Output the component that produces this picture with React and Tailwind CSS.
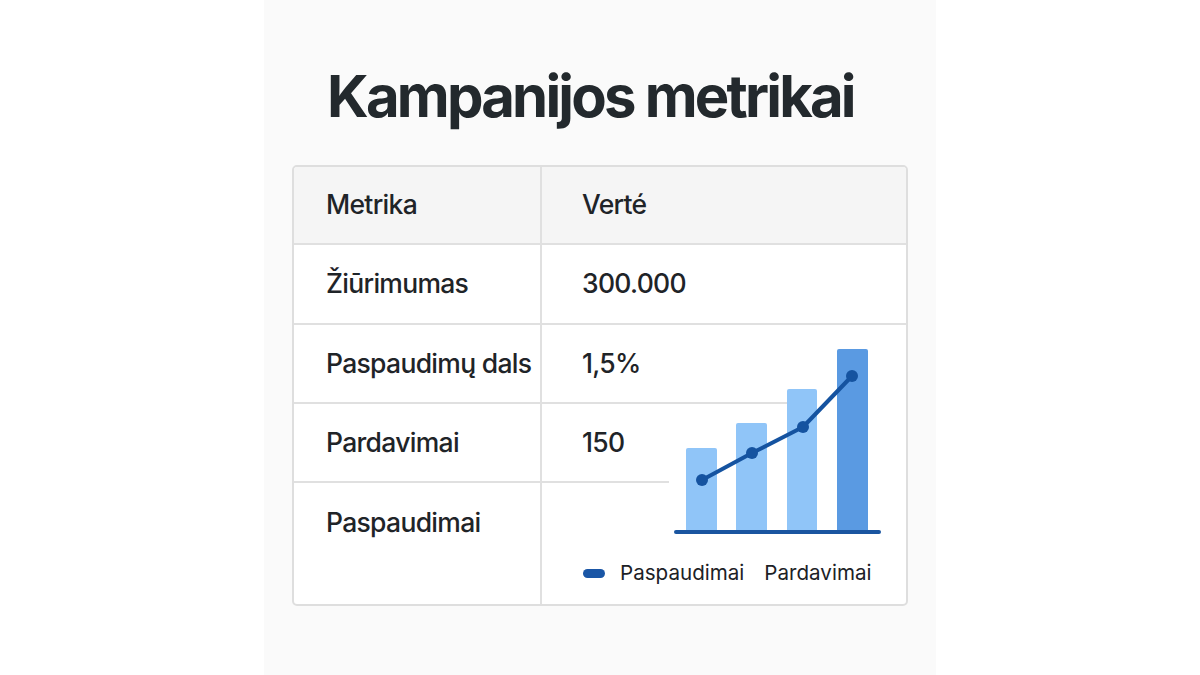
export default function App() {
  const rows = [
    { k: "Žiūrimumas", v: "300.000", h: "h-[80px]" },
    { k: "Paspaudimų dals", v: "1,5%", h: "h-[79px]" },
    { k: "Pardavimai", v: "150", h: "h-[79px]" },
  ];
  return (
    <div className="w-[1200px] h-[675px] bg-white flex justify-center overflow-hidden" style={{ fontFamily: "Inter, 'Noto Sans', sans-serif" }}>
      <div className="w-[672px] h-full bg-[#fafafa] flex flex-col pl-[28px] text-[#1f2428]">
        <h1 className="ml-[35px] mt-[67px] text-[58px] leading-[58px] font-bold text-[#23292d] tracking-[-2.8px] whitespace-nowrap">Kampanijos metrikai</h1>
        <div className="relative mt-[40px] w-[616px] border-2 border-[#dedede] rounded-[5px] bg-white overflow-hidden">
          <div className="grid grid-cols-[248px_1fr] text-[26.5px] font-medium tracking-[-0.7px]">
            <div className="h-[78px] bg-[#f5f5f5] border-b-2 border-r-2 border-[#e0e0e0] flex items-center pl-[32px]">Metrika</div>
            <div className="h-[78px] bg-[#f5f5f5] border-b-2 border-[#e0e0e0] flex items-center pl-[40px]">Verté</div>
            {rows.map((r) => (
              <div key={r.k} className="contents">
                <div className={`${r.h} border-b-2 border-r-2 border-[#e0e0e0] flex items-center pl-[32px] whitespace-nowrap overflow-hidden`}>{r.k}</div>
                <div className={`${r.h} border-b-2 border-[#e0e0e0] flex items-center pl-[40px]`}>{r.v}</div>
              </div>
            ))}
            <div className="h-[121px] border-r-2 border-[#e0e0e0] pl-[32px] pt-[20px]">Paspaudimai</div>
            <div className="h-[121px] flex flex-col justify-end pl-[41px] pb-[15px] tracking-normal font-normal">
              <div className="flex items-center text-[20.6px] text-[#1c2126]">
                <span className="w-[22px] h-[9px] rounded-full bg-[#1a56a6] mr-[15px]" />
                <span>Paspaudimai</span>
                <span className="ml-[20px]">Pardavimai</span>
              </div>
            </div>
          </div>
          <svg className="absolute left-[375px] top-[173px]" width="237" height="200" viewBox="0 0 237 200">
            <rect x="0" y="139" width="237" height="61" fill="white" />
            <rect x="118" y="60" width="119" height="6" fill="white" />
            <path d="M17 110 a2 2 0 0 1 2 -2 h27 a2 2 0 0 1 2 2 V191 H17 Z" fill="#90c5f8" />
            <path d="M67 85 a2 2 0 0 1 2 -2 h27 a2 2 0 0 1 2 2 V191 H67 Z" fill="#90c5f8" />
            <path d="M118 51 a2 2 0 0 1 2 -2 h26 a2 2 0 0 1 2 2 V191 H118 Z" fill="#90c5f8" />
            <path d="M168 11 a2 2 0 0 1 2 -2 h27 a2 2 0 0 1 2 2 V191 H168 Z" fill="#5a9ae2" />
            <rect x="5" y="190" width="207" height="4" rx="2" fill="#1a55a0" />
            <polyline points="33,140 83,113 134,87 183,36" fill="none" stroke="#1553a0" strokeWidth="4" strokeLinejoin="round" strokeLinecap="round" />
            <circle cx="33" cy="140" r="6" fill="#1553a0" />
            <circle cx="83" cy="113" r="6" fill="#1553a0" />
            <circle cx="134" cy="87" r="6" fill="#1553a0" />
            <circle cx="183" cy="36" r="6" fill="#1553a0" />
          </svg>
        </div>
      </div>
    </div>
  );
}
